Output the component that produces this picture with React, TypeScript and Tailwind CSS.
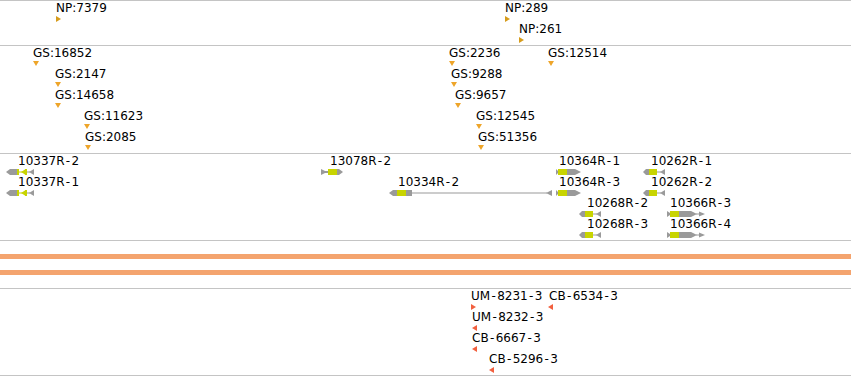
import React from 'react';

const GRAY = '#9a9a9a';
const CDS = '#c8d400';

type Dir = 'right' | 'left' | 'down';
type Feature = { label: string; x: number; gx: number; glyph: React.ReactNode };

function Triangle({ dir, color }: { dir: Dir; color: string }) {
  const pts = dir === 'down' ? '0,0 6,0 3,5' : dir === 'right' ? '0,0 5,3 0,6' : '5,0 0,3 5,6';
  return (
    <svg width="6" height="6" viewBox="0 0 6 6">
      <polygon points={pts} fill={color} />
    </svg>
  );
}

function GeneGlyph({ kind }: { kind: 'A' | 'B' | 'C' | 'D' | 'E' | 'F' }) {
  if (kind === 'A')
    return (
      <svg width="28" height="6" viewBox="0 0 28 6">
        <path d="M0 3 L4 0 H11 V6 H4 Z" fill={GRAY} />
        <rect x="11" y="0" width="2" height="6" fill={CDS} />
        <rect x="13" y="2.5" width="8" height="1" fill={CDS} />
        <polygon points="15,3 19,0.5 19,5.5" fill={CDS} />
        <rect x="19" y="0" width="2" height="6" fill={CDS} />
        <rect x="21" y="2.5" width="3" height="1" fill={GRAY} />
        <polygon points="23,3 28,0 28,6" fill={GRAY} />
      </svg>
    );
  if (kind === 'B')
    return (
      <svg width="22" height="6" viewBox="0 0 22 6">
        <path d="M0 0 L4 2 H7 V4 H4 L0 6 Z" fill={GRAY} />
        <rect x="7" y="0" width="9" height="6" fill={CDS} />
        <path d="M16 0 H18 L22 3 L18 6 H16 Z" fill={GRAY} />
      </svg>
    );
  if (kind === 'C')
    return (
      <svg width="163" height="6" viewBox="0 0 163 6">
        <path d="M0 3 L4 0 H8 V6 H4 Z" fill={GRAY} />
        <rect x="8" y="0" width="9" height="6" fill={CDS} />
        <rect x="17" y="0" width="6" height="6" fill={GRAY} />
        <rect x="23" y="2.5" width="135" height="1" fill={GRAY} />
        <polygon points="157,3 163,0 163,6" fill={GRAY} />
      </svg>
    );
  if (kind === 'D')
    return (
      <svg width="25" height="6" viewBox="0 0 25 6">
        <path d="M0 0 L2 2 V4 L0 6 Z" fill={GRAY} />
        <rect x="2" y="0" width="9" height="6" fill={CDS} />
        <path d="M11 0 H19 L25 3 L19 6 H11 Z" fill={GRAY} />
      </svg>
    );
  if (kind === 'E')
    return (
      <svg width="22" height="6" viewBox="0 0 22 6">
        <path d="M0 3 L3 0 H6 V6 H3 Z" fill={GRAY} />
        <rect x="6" y="0" width="8" height="6" fill={CDS} />
        <rect x="14" y="2.5" width="4" height="1" fill={GRAY} />
        <polygon points="17,3 22,0 22,6" fill={GRAY} />
      </svg>
    );
  return (
    <svg width="38" height="6" viewBox="0 0 38 6">
      <path d="M0 0 L3 2 V4 L0 6 Z" fill={GRAY} />
      <rect x="3" y="0" width="9" height="6" fill={CDS} />
      <rect x="12" y="0" width="12" height="6" fill={GRAY} />
      <polygon points="24,0 30,3 24,6" fill={GRAY} />
      <rect x="29" y="2.5" width="4" height="1" fill={GRAY} />
      <polygon points="32,0.5 38,3 32,5.5" fill={GRAY} />
    </svg>
  );
}

const mk = (label: string, x: number, dir: Dir, color: string, gx = x): Feature => ({
  label,
  x,
  gx,
  glyph: <Triangle dir={dir} color={color} />,
});

const gene = (label: string, x: number, kind: 'A' | 'B' | 'C' | 'D' | 'E' | 'F', gx: number): Feature => ({
  label,
  x,
  gx,
  glyph: <GeneGlyph kind={kind} />,
});

const NPC = '#d69c1c';
const GSC = '#eea52a';
const PRC = '#f2603f';

const NP_ROWS: Feature[][] = [
  [mk('NP:7379', 56, 'right', NPC), mk('NP:289', 505, 'right', NPC)],
  [mk('NP:261', 519, 'right', NPC)],
];

const GS_ROWS: Feature[][] = [
  [mk('GS:16852', 33, 'down', GSC), mk('GS:2236', 449, 'down', GSC), mk('GS:12514', 548, 'down', GSC)],
  [mk('GS:2147', 55, 'down', GSC), mk('GS:9288', 451, 'down', GSC)],
  [mk('GS:14658', 55, 'down', GSC), mk('GS:9657', 455, 'down', GSC)],
  [mk('GS:11623', 84, 'down', GSC), mk('GS:12545', 476, 'down', GSC)],
  [mk('GS:2085', 85, 'down', GSC), mk('GS:51356', 478, 'down', GSC)],
];

const GENE_ROWS: Feature[][] = [
  [gene('10337R-2', 18, 'A', 6), gene('13078R-2', 330, 'B', 321), gene('10364R-1', 559, 'D', 556), gene('10262R-1', 651, 'E', 643)],
  [gene('10337R-1', 18, 'A', 6), gene('10334R-2', 398, 'C', 389), gene('10364R-3', 559, 'D', 556), gene('10262R-2', 651, 'E', 643)],
  [gene('10268R-2', 587, 'E', 579), gene('10366R-3', 670, 'F', 667)],
  [gene('10268R-3', 587, 'E', 579), gene('10366R-4', 670, 'F', 667)],
];

const PROBE_ROWS: Feature[][] = [
  [mk('UM-8231-3', 471, 'right', PRC), mk('CB-6534-3', 549, 'left', PRC, 548)],
  [mk('UM-8232-3', 472, 'left', PRC)],
  [mk('CB-6667-3', 472, 'left', PRC)],
  [mk('CB-5296-3', 489, 'left', PRC)],
];

function Label({ text }: { text: string }) {
  const parts = text.split('-');
  return (
    <span className="whitespace-nowrap leading-[14px]">
      {parts.map((p, i) => (
        <React.Fragment key={i}>
          {i > 0 && <span className="inline-block w-[7px] text-center">-</span>}
          {p}
        </React.Fragment>
      ))}
    </span>
  );
}

function Track({ rows, className }: { rows: Feature[][]; className: string }) {
  return (
    <div className={`flex flex-col border-b border-[#c4c4c4] ${className}`}>
      {rows.map((row, i) => (
        <div key={i} className="relative h-[21px] shrink-0">
          {row.map((f) => (
            <div key={f.label} className="absolute top-0 flex flex-col items-start" style={{ left: f.gx }}>
              <div style={{ marginLeft: f.x - f.gx }}>
                <Label text={f.label} />
              </div>
              <div className="mt-px flex">{f.glyph}</div>
            </div>
          ))}
        </div>
      ))}
    </div>
  );
}

export default function App() {
  return (
    <div className="w-[851px] h-[376px] overflow-hidden bg-white text-black font-['DejaVu_Sans',sans-serif] text-[12px] leading-[14px]">
      <div className="border-t border-[#c4c4c4]" />
      <Track rows={NP_ROWS} className="h-[45px]" />
      <Track rows={GS_ROWS} className="h-[108px]" />
      <Track rows={GENE_ROWS} className="h-[87px]" />

      {/* sequence */}
      <div className="h-[48px] border-b border-[#c4c4c4] pt-[13px] flex flex-col gap-[11px]">
        <div className="h-[5px] bg-[#f4a46f]" />
        <div className="h-[5px] bg-[#f4a46f]" />
      </div>

      <Track rows={PROBE_ROWS} className="h-[87px]" />
    </div>
  );
}
